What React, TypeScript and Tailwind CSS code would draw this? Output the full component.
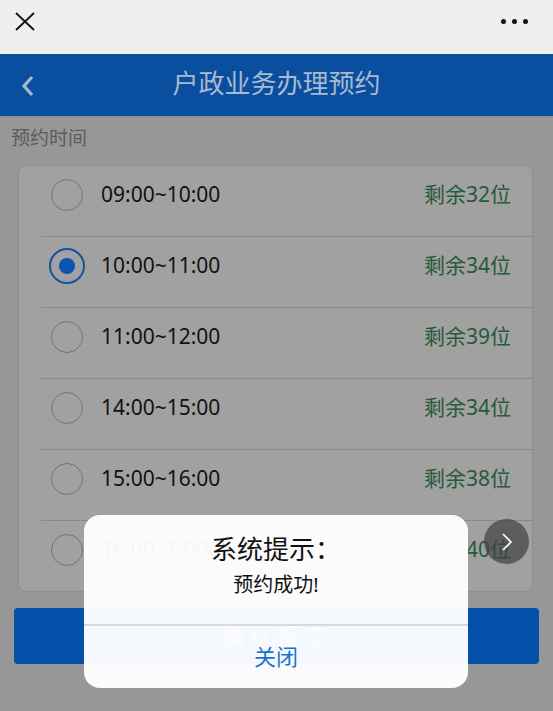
import React from "react";

const slots = [
  { t: "09:00~10:00", n: 32 },
  { t: "10:00~11:00", n: 34 },
  { t: "11:00~12:00", n: 39 },
  { t: "14:00~15:00", n: 34 },
  { t: "15:00~16:00", n: 38 },
  { t: "16:00~17:00", n: 40 },
];

const font = { fontFamily: '"Noto Sans", "Noto Sans CJK SC", sans-serif' };

export default function App() {
  return (
    <div className="relative w-[553px] h-[711px] overflow-hidden bg-[#979797]" style={font}>
      {/* top bar */}
      <div className="h-[54px] bg-[#efefef] flex items-center justify-between pl-[15px] pr-[25px]">
        <svg width="20" height="19" viewBox="0 0 20 19" className="-mt-[12px]">
          <path d="M1 1 L19 18 M19 1 L1 18" stroke="#111" strokeWidth="1.8" fill="none" />
        </svg>
        <div className="flex gap-[6px] items-center -mt-[12px]">
          <span className="w-[5px] h-[5px] rounded-full bg-[#111]" />
          <span className="w-[5px] h-[5px] rounded-full bg-[#111]" />
          <span className="w-[5px] h-[5px] rounded-full bg-[#111]" />
        </div>
      </div>
      {/* header */}
      <div className="relative h-[62px] bg-[#0a4f9f] flex items-center justify-center">
        <svg className="absolute left-[20px] top-[21px]" width="16" height="22" viewBox="0 0 16 22">
          <path d="M12 2 L4 11 L12 20" stroke="#a7b7cd" strokeWidth="3.2" fill="none" />
        </svg>
        <div className="text-[26px] text-[#a9b9cf] leading-none -mt-[4px]">户政业务办理预约</div>
      </div>
      <div className="h-[2px] bg-[#8f8f8f]" />
      <div className="px-[11px] pt-[8px] text-[19px] leading-[25px] text-[#5c5c5c]">预约时间</div>
      {/* card */}
      <div className="mx-[18px] mt-[14px] w-[515px] rounded-[8px] bg-[#a1a1a1] border border-[#8e8e8e] overflow-hidden">
        {slots.map((s, i) => (
          <div key={i} className="ml-[22px]">
            <div className="h-[70px] flex items-center pb-[12px] pl-[10px] pr-[21px]">
              <div className="w-[32px] flex items-center justify-center">
                {i === 1 ? (
                  <div className="shrink-0 w-[36px] h-[36px] rounded-full border-[2.5px] border-[#17529a] flex items-center justify-center">
                    <div className="w-[16px] h-[16px] rounded-full bg-[#0a55af]" />
                  </div>
                ) : (
                  <div className="shrink-0 w-[32px] h-[32px] rounded-full border-[1.5px] border-[#747474]" />
                )}
              </div>
              <div className="ml-[18px] text-[21px] text-[#111] flex-1">{s.t}</div>
              <div className="text-[21px] text-[#275a3a]">剩余{s.n}位</div>
            </div>
            {i < slots.length - 1 && <div className="h-px bg-[#8a8a8a]" />}
          </div>
        ))}
      </div>
      {/* submit button */}
      <div className="mx-[14px] mt-[16px] h-[56px] rounded-[4px] bg-[#0550a8] flex items-center justify-center text-[24px] text-[#a9b9cf] tracking-[4px]">
        确认提交
      </div>

      {/* floating next button */}
      <div className="absolute left-[484px] top-[519px] w-[45px] h-[45px] rounded-full bg-[#404040]/70 flex items-center justify-center">
        <svg width="14" height="20" viewBox="0 0 14 20">
          <path d="M3 2 L11 10 L3 18" stroke="#fff" strokeWidth="1.6" fill="none" />
        </svg>
      </div>

      {/* dialog */}
      <div className="absolute left-[84px] top-[515px] w-[384px] h-[173px] rounded-[16px] bg-white/[0.96] flex flex-col">
        <div className="h-[109px] flex flex-col items-center">
          <div className="mt-[19px] text-[26px] leading-[30px] text-[#111]">系统提示：</div>
          <div className="mt-[8px] text-[20px] leading-[26px] text-[#111]">预约成功!</div>
        </div>
        <div className="h-[2px] bg-[#d4d9e2]" />
        <div className="flex-1 flex items-center justify-center text-[22px] text-[#1a73d2] pb-[2px]">关闭</div>
      </div>
    </div>
  );
}
